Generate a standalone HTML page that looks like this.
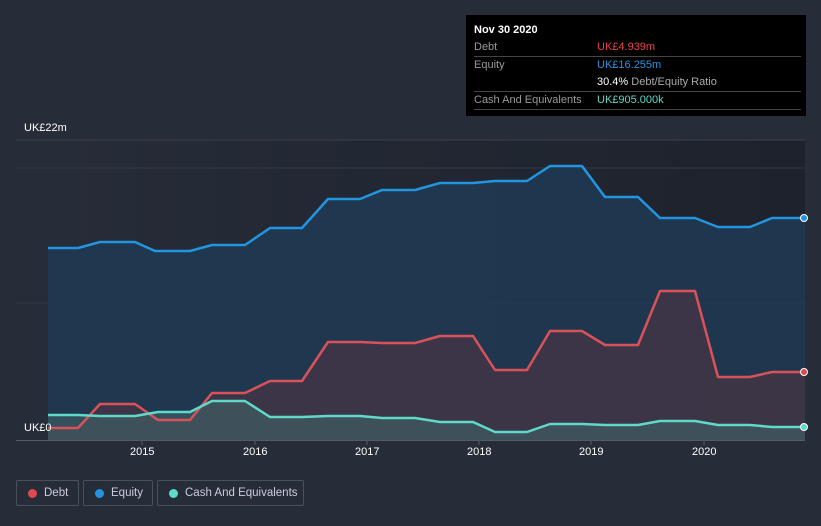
<!DOCTYPE html>
<html><head><style>
body{margin:0;width:821px;height:526px;background:#262c38;font-family:"Liberation Sans",sans-serif;overflow:hidden;position:relative}
.t{position:absolute;font-size:11px;color:#fff}
.lg{position:absolute;top:480px;height:26px;border:1px solid #4a505c;border-radius:2px;box-sizing:border-box;color:#ccd;font-size:11.5px;line-height:24px;padding-left:27px;white-space:nowrap}
.lg i{position:absolute;left:11px;top:8px;width:9px;height:9px;border-radius:50%}
.tip{position:absolute;left:466px;top:15px;width:340px;height:101px;background:#000;font-size:11px;color:#999}
.tip div{position:absolute;left:8px;right:5px;border-bottom:1px solid #444;height:17px;line-height:17px}
.tip b{font-weight:normal;position:absolute;left:123px}
</style></head><body>
<svg width="821" height="526" style="position:absolute;left:0;top:0">
<defs><linearGradient id="bg" x1="0" x2="1" y1="0" y2="0"><stop offset="0" stop-color="#262c38"/><stop offset="1" stop-color="#1d222c"/></linearGradient></defs>
<rect x="48" y="140" width="757" height="300" fill="url(#bg)"/>
<line x1="16" y1="140" x2="805" y2="140" stroke="#3a404c"/>
<line x1="16" y1="168" x2="805" y2="168" stroke="#323845"/>
<line x1="16" y1="303" x2="805" y2="303" stroke="#323845"/>
<path d="M48,248 L78,248 100,242 135,242 155,251 190,251 212,245 245,245 270,228 302,228 328,199 360,199 382,190 415,190 440,183 473,183 495,181 527,181 550,166 582,166 605,197 638,197 660,218 695,218 718,227 750,227 772,218 805,218 L805,440 48,440Z" fill="#1f3b55" fill-opacity="0.85"/>
<path d="M48,428 L78,428 100,404 135,404 158,420 190,420 212,393 245,393 270,381 302,381 328,342 360,342 382,343 415,343 440,336 473,336 495,370 527,370 550,331 582,331 605,345 638,345 660,291 695,291 718,377 750,377 772,372 805,372 L805,440 48,440Z" fill="#443445" fill-opacity="0.8"/>
<path d="M48,415 L78,415 100,416 135,416 158,412 190,412 212,401 245,401 270,417 302,417 328,416 360,416 382,418 415,418 440,422 473,422 495,432 527,432 550,424 582,424 605,425 638,425 660,421 695,421 718,425 750,425 772,427 805,427 L805,440 48,440Z" fill="#3f6365" fill-opacity="0.6"/>
<path d="M48,248 L78,248 100,242 135,242 155,251 190,251 212,245 245,245 270,228 302,228 328,199 360,199 382,190 415,190 440,183 473,183 495,181 527,181 550,166 582,166 605,197 638,197 660,218 695,218 718,227 750,227 772,218 805,218" fill="none" stroke="#2394e0" stroke-width="2.5" stroke-linejoin="round"/>
<path d="M48,428 L78,428 100,404 135,404 158,420 190,420 212,393 245,393 270,381 302,381 328,342 360,342 382,343 415,343 440,336 473,336 495,370 527,370 550,331 582,331 605,345 638,345 660,291 695,291 718,377 750,377 772,372 805,372" fill="none" stroke="#d9525a" stroke-width="2.5" stroke-linejoin="round"/>
<path d="M48,415 L78,415 100,416 135,416 158,412 190,412 212,401 245,401 270,417 302,417 328,416 360,416 382,418 415,418 440,422 473,422 495,432 527,432 550,424 582,424 605,425 638,425 660,421 695,421 718,425 750,425 772,427 805,427" fill="none" stroke="#5fd9c8" stroke-width="2.5" stroke-linejoin="round"/>
<circle cx="804" cy="218" r="3.5" fill="#2394e0" stroke="#fff"/>
<circle cx="804" cy="372" r="3.5" fill="#e04850" stroke="#fff"/>
<circle cx="804" cy="427" r="3.5" fill="#5fd9c8" stroke="#fff"/>
<line x1="16" y1="440.5" x2="805" y2="440.5" stroke="#555b66"/>
<g stroke="#555b66"><line x1="142" y1="440" x2="142" y2="445"/><line x1="255" y1="440" x2="255" y2="445"/><line x1="367" y1="440" x2="367" y2="445"/><line x1="479" y1="440" x2="479" y2="445"/><line x1="591" y1="440" x2="591" y2="445"/><line x1="704" y1="440" x2="704" y2="445"/></g>
</svg>
<div class="t" style="left:24px;top:122px">UK£22m</div>
<div class="t" style="left:24px;top:422px">UK£0</div>
<div class="t" style="left:130px;top:446px">2015</div>
<div class="t" style="left:243px;top:446px">2016</div>
<div class="t" style="left:355px;top:446px">2017</div>
<div class="t" style="left:467px;top:446px">2018</div>
<div class="t" style="left:579px;top:446px">2019</div>
<div class="t" style="left:692px;top:446px">2020</div>
<div class="lg" style="left:16px;width:63px"><i style="background:#e04850"></i>Debt</div>
<div class="lg" style="left:83px;width:70px"><i style="background:#2394e0"></i>Equity</div>
<div class="lg" style="left:157px;width:147px"><i style="background:#5fd9c8"></i>Cash And Equivalents</div>
<div class="tip">
<span style="position:absolute;left:8px;top:9px;color:#fff;font-weight:bold">Nov 30 2020</span>
<div style="top:24px">Debt<b style="color:#e8434d">UK£4.939m</b></div>
<div style="top:42px;height:34px">Equity<b style="color:#2a95e4">UK£16.255m</b><b style="top:17px;color:#aaa"><span style="color:#fff">30.4%</span> Debt/Equity Ratio</b></div>
<div style="top:77px">Cash And Equivalents<b style="color:#5fd9c8">UK£905.000k</b></div>
</div>
</body></html>
